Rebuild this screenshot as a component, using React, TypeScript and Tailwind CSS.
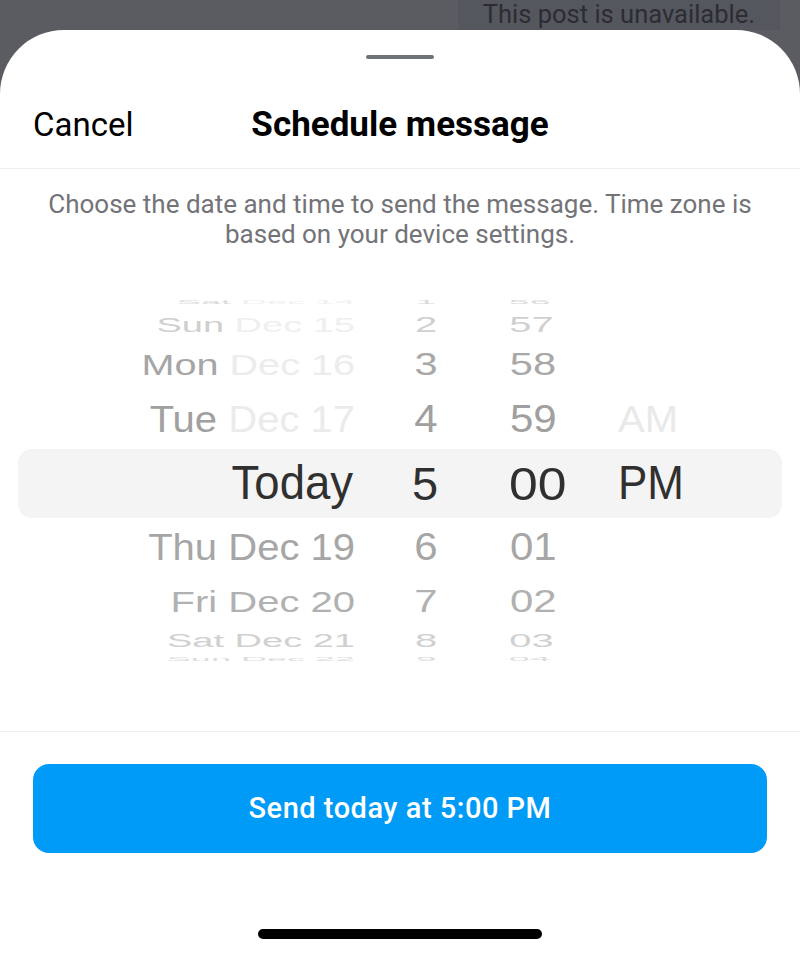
import React from "react";

type Row = {
  h: string;
  scale: string;
  day: string;
  date: string;
  hour: string;
  minute: string;
  ampm?: string;
  dayColor: string;
  dateColor: string;
  numColor: string;
  ampmColor?: string;
};

const above: Row[] = [
  { h: "h-[26px]", scale: "scale-y-[0.14] scale-x-[0.9]", day: "Sat", date: "Dec 14", hour: "1", minute: "56", dayColor: "text-[#dadada]", dateColor: "text-[#f0f0f0]", numColor: "text-[#dadada]" },
  { h: "h-[19px]", scale: "scale-y-[0.52] scale-x-[0.95]", day: "Sun", date: "Dec 15", hour: "2", minute: "57", dayColor: "text-[#cfcfcf]", dateColor: "text-[#efefef]", numColor: "text-[#d0d0d0]" },
  { h: "h-[61px]", scale: "scale-y-[0.73] scale-x-[0.99]", day: "Mon", date: "Dec 16", hour: "3", minute: "58", dayColor: "text-[#a6a6a6]", dateColor: "text-[#ececec]", numColor: "text-[#a8a8a8]" },
  { h: "h-[47px]", scale: "scale-y-[0.94]", day: "Tue", date: "Dec 17", hour: "4", minute: "59", ampm: "AM", dayColor: "text-[#a0a0a0]", dateColor: "text-[#ebebeb]", numColor: "text-[#a0a0a0]", ampmColor: "text-[#e9e9e9]" },
];

const below: Row[] = [
  { h: "h-[45px]", scale: "scale-y-[0.94]", day: "Thu", date: "Dec 19", hour: "6", minute: "01", dayColor: "text-[#a6a6a6]", dateColor: "text-[#a6a6a6]", numColor: "text-[#a6a6a6]" },
  { h: "h-[65px]", scale: "scale-y-[0.73]", day: "Fri", date: "Dec 20", hour: "7", minute: "02", dayColor: "text-[#b1b1b1]", dateColor: "text-[#b1b1b1]", numColor: "text-[#b1b1b1]" },
  { h: "h-[13px]", scale: "scale-y-[0.45] scale-x-[0.95]", day: "Sat", date: "Dec 21", hour: "8", minute: "03", dayColor: "text-[#d0d0d0]", dateColor: "text-[#d0d0d0]", numColor: "text-[#d0d0d0]" },
  { h: "h-[24px]", scale: "scale-y-[0.12] scale-x-[0.9]", day: "Sun", date: "Dec 22", hour: "9", minute: "04", dayColor: "text-[#dcdcdc]", dateColor: "text-[#dcdcdc]", numColor: "text-[#dcdcdc]" },
];

const WheelRow = ({ row }: { row: Row }) => (
  <div className={`${row.h} flex items-center text-[40px] leading-none`}>
    <div className={`w-[355px] shrink-0 text-right origin-right ${row.scale}`}>
      <span className={row.dayColor}>{row.day}</span>{" "}
      <span className={row.dateColor}>{row.date}</span>
    </div>
    <div className={`w-[142px] shrink-0 text-center text-[42px] ${row.numColor} ${row.scale}`}>{row.hour}</div>
    <div className={`w-[121px] shrink-0 pl-[13px] text-[42px] origin-left ${row.numColor} ${row.scale}`}>{row.minute}</div>
    <div className={`flex-1 text-[40px] origin-left ${row.ampmColor ?? ""} ${row.scale}`}>{row.ampm ?? ""}</div>
  </div>
);

export default function App() {
  return (
    <div className="w-[800px] h-[955px] overflow-hidden bg-[#5b5c61] flex flex-col font-['Roboto',sans-serif]">
      <div className="h-[30px] flex justify-end shrink-0">
        <div className="mr-[20px] w-[322px] bg-[#55575e] pr-[25px] text-right text-[25.5px] leading-[28px] text-[#2b2d32]">
          This post is unavailable.
        </div>
      </div>

      <div className="flex-1 bg-white rounded-t-[64px] flex flex-col">
        <div className="mt-[25px] mx-auto w-[68px] h-[4px] rounded-full bg-[#6f7277]" />

        <div className="h-[110px] pt-[22px] border-b border-[#efefef] grid grid-cols-[1fr_auto_1fr] items-center">
          <div className="pl-[33px] text-[33px] text-black leading-none">Cancel</div>
          <div className="text-[35px] font-bold text-black leading-none">Schedule message</div>
          <div />
        </div>

        <p className="pt-[20px] text-center text-[26px] leading-[30px] text-[#737378]">
          Choose the date and time to send the message. Time zone is
          <br />
          based on your device settings.
        </p>

        <div className="mt-[40px] flex flex-col font-['Liberation_Sans',sans-serif]">
          {above.map((r, i) => (
            <WheelRow key={i} row={r} />
          ))}
          <div className="h-[82px] flex items-center">
            <div className="mx-[18px] h-[69px] flex-1 rounded-[14px] bg-[#f4f4f4] flex items-center leading-none text-[#303030]">
              <div className="w-[335px] shrink-0 text-right text-[45.5px] scale-y-[1.05]">Today</div>
              <div className="w-[144px] shrink-0 text-center text-[47px]">5</div>
              <div className="w-[121px] shrink-0 pl-[11px] text-[47px] origin-left scale-x-[1.1]">00</div>
              <div className="flex-1 text-[44px] scale-y-[1.08]">PM</div>
            </div>
          </div>
          {below.map((r, i) => (
            <WheelRow key={i} row={r} />
          ))}
        </div>

        <div className="mt-[60px] border-t border-[#efefef]" />

        <button className="mt-[32px] mx-[33px] h-[89px] rounded-[16px] bg-[#009bf7] text-white text-[29px] font-medium tracking-[0.5px]">
          Send today at 5:00 PM
        </button>

        <div className="mt-[76px] mx-auto w-[284px] h-[10px] rounded-full bg-black" />
      </div>
    </div>
  );
}
